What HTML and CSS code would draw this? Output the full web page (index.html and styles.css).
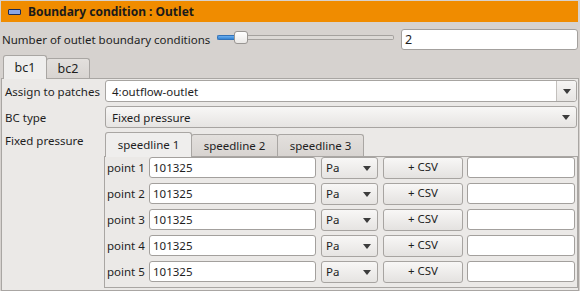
FILE: index.html
```html
<!DOCTYPE html>
<html>
<head>
<meta charset="utf-8">
<link rel="stylesheet" href="styles.css">
</head>
<body>
<div class="app">
  <div class="header"><span class="hicon"></span><span class="title">Boundary condition : Outlet</span></div>
  <div class="count-row">
    <span class="count-label">Number of outlet boundary conditions</span>
    <div class="slider"><div class="groove-fill"></div><div class="handle"></div><div class="groove"></div></div>
    <div class="lineedit count-edit">2</div>
  </div>
  <div class="tabbar outer-tabs">
    <div class="tab active">bc1</div>
    <div class="tab">bc2</div>
  </div>
  <div class="pane outer-pane">
    <div class="form-row">
      <span class="form-label">Assign to patches</span>
      <div class="combo editable"><span class="combo-text">4:outflow-outlet</span><span class="combo-btn"><span class="arrow"></span></span></div>
    </div>
    <div class="form-row">
      <span class="form-label">BC type</span>
      <div class="combo"><span class="combo-text">Fixed pressure</span><span class="combo-arrow"><span class="arrow"></span></span></div>
    </div>
    <div class="form-row top">
      <span class="form-label fp">Fixed pressure</span>
      <div class="inner">
        <div class="tabbar inner-tabs">
          <div class="tab active">speedline 1</div>
          <div class="tab">speedline 2</div>
          <div class="tab">speedline 3</div>
        </div>
        <div class="pane inner-pane">
          <div class="point-row"><span class="plabel">point 1</span><div class="lineedit val">101325</div><div class="combo pa"><span class="combo-text">Pa</span><span class="combo-arrow"><span class="arrow"></span></span></div><div class="btn">+ CSV</div><div class="lineedit csv"></div></div>
          <div class="point-row"><span class="plabel">point 2</span><div class="lineedit val">101325</div><div class="combo pa"><span class="combo-text">Pa</span><span class="combo-arrow"><span class="arrow"></span></span></div><div class="btn">+ CSV</div><div class="lineedit csv"></div></div>
          <div class="point-row"><span class="plabel">point 3</span><div class="lineedit val">101325</div><div class="combo pa"><span class="combo-text">Pa</span><span class="combo-arrow"><span class="arrow"></span></span></div><div class="btn">+ CSV</div><div class="lineedit csv"></div></div>
          <div class="point-row"><span class="plabel">point 4</span><div class="lineedit val">101325</div><div class="combo pa"><span class="combo-text">Pa</span><span class="combo-arrow"><span class="arrow"></span></span></div><div class="btn">+ CSV</div><div class="lineedit csv"></div></div>
          <div class="point-row"><span class="plabel">point 5</span><div class="lineedit val">101325</div><div class="combo pa"><span class="combo-text">Pa</span><span class="combo-arrow"><span class="arrow"></span></span></div><div class="btn">+ CSV</div><div class="lineedit csv"></div></div>
        </div>
      </div>
    </div>
  </div>
</div>
</body>
</html>
```

FILE: styles.css
```css
* { box-sizing: border-box; }
html, body { margin: 0; padding: 0; }
body {
  width: 580px;
  height: 291px;
  overflow: hidden;
  background: #d6d2cf;
  font-family: "Noto Sans", "DejaVu Sans", sans-serif;
  font-size: 11.5px;
  color: #1e1e1e;
}
.app { display: flex; flex-direction: column; }

.header {
  margin: 1px 2px 0 1px;
  height: 21px;
  background: #f08c00;
  display: flex;
  align-items: center;
  padding-left: 7px;
}
.hicon {
  width: 13px;
  height: 6px;
  background: #8ca6e6;
  border: 1px solid #1c2a55;
  border-radius: 1px;
  margin-right: 7px;
}
.title { font-weight: bold; font-size: 12px; color: #1a1a1a; }

.count-row {
  margin-top: 7px;
  height: 21px;
  display: flex;
  align-items: center;
  padding-left: 2px;
}
.count-label { width: 215px; }
.slider {
  width: 177px;
  display: flex;
  align-items: center;
  height: 21px;
  margin-top: -4px;
}
.groove-fill {
  width: 18px;
  height: 5px;
  background: linear-gradient(#6aaef0, #3583d2);
  border: 1px solid #3272b8;
  border-right: none;
  border-radius: 2px 0 0 2px;
}
.handle {
  width: 14px;
  height: 13px;
  background: linear-gradient(#ffffff, #ebe9e7);
  border: 1px solid #999693;
  border-radius: 3px;
  margin-left: -1px;
}
.groove {
  flex: 1;
  height: 5px;
  background: #dcd9d6;
  border: 1px solid #a4a19e;
  border-left: none;
  border-radius: 0 2px 2px 0;
}
.lineedit {
  background: #ffffff;
  border: 1px solid #a3a09d;
  border-radius: 3px;
  height: 21px;
  display: flex;
  align-items: center;
  padding-left: 3px;
}
.count-edit { margin-left: 7px; width: 177px; font-size: 12.5px; }

.tabbar { display: flex; align-items: flex-end; position: relative; z-index: 1; }
.outer-tabs { margin-top: 3px; padding-left: 3px; height: 25px; }
.tab {
  height: 21px;
  background: linear-gradient(#e3e0dd, #d8d4d1);
  border: 1px solid #a9a6a3;
  border-bottom: none;
  border-radius: 3px 3px 0 0;
  display: flex;
  align-items: center;
  justify-content: center;
  margin-left: -1px;
}
.tab:first-child { margin-left: 0; }
.tab.active {
  background: #efeeed;
  margin-bottom: -1px;
  height: 25px;
  padding-bottom: 1px;
}
.outer-tabs .tab { width: 44px; font-size: 12.5px; height: 20px; }
.outer-tabs .tab.active { height: 24px; }

.pane {
  background: #ebe9e7;
  border: 1px solid #a9a6a3;
}
.outer-pane {
  margin-left: 1px;
  width: 578px;
  height: 213px;
  padding: 1px 1px 0 2px;
  display: flex;
  flex-direction: column;
  gap: 4px;
}
.form-row { display: flex; align-items: center; }
.form-row.top { align-items: flex-start; }
.form-label { width: 101px; flex: none; padding-left: 1px; }
.fp { margin-top: 1px; }

.combo {
  height: 22px;
  border: 1px solid #a7a4a1;
  border-radius: 3px;
  background: linear-gradient(#f8f7f6, #e6e4e2);
  display: flex;
  align-items: center;
  flex: 1;
}
.combo.editable { background: #ffffff; }
.combo-text { flex: 1; padding-left: 6px; }
.combo-btn {
  width: 20px;
  height: 100%;
  border-left: 1px solid #c3c0bd;
  background: linear-gradient(#f6f5f4, #e7e5e3);
  border-radius: 0 3px 3px 0;
  display: flex; align-items: center; justify-content: center;
}
.combo-arrow {
  width: 20px;
  display: flex; align-items: center; justify-content: center;
}
.arrow {
  width: 0; height: 0;
  border-left: 4px solid transparent;
  border-right: 4px solid transparent;
  border-top: 5px solid #3c3c3c;
  margin-top: 1px;
}

.inner { display: flex; flex-direction: column; flex: 1; margin-left: -1px; margin-right: -1px; }
.inner-tabs { padding-left: 1px; height: 24px; }
.inner-tabs .tab { width: 87px; height: 22px; }
.inner-tabs .tab.active { width: 87px; height: 25px; }
.inner-pane {
  height: 132px;
  padding: 0 2px 0 2px;
  display: flex;
  flex-direction: column;
  gap: 5px;
}
.point-row { display: flex; align-items: center; height: 21px; }
.plabel { width: 42px; flex: none; }
.val { width: 167px; flex: none; }
.pa { flex: none; width: 57px; margin-left: 5px; height: 22px; }
.pa .combo-text { padding-left: 4px; }
.btn {
  width: 80px;
  flex: none;
  height: 22px;
  margin-left: 5px;
  border: 1px solid #a7a4a1;
  border-radius: 3px;
  background: linear-gradient(#f8f7f6, #e4e2e0);
  display: flex; align-items: center; justify-content: center;
  padding-bottom: 2px;
}
.csv { width: 108px; flex: none; margin-left: 4px; }
```
